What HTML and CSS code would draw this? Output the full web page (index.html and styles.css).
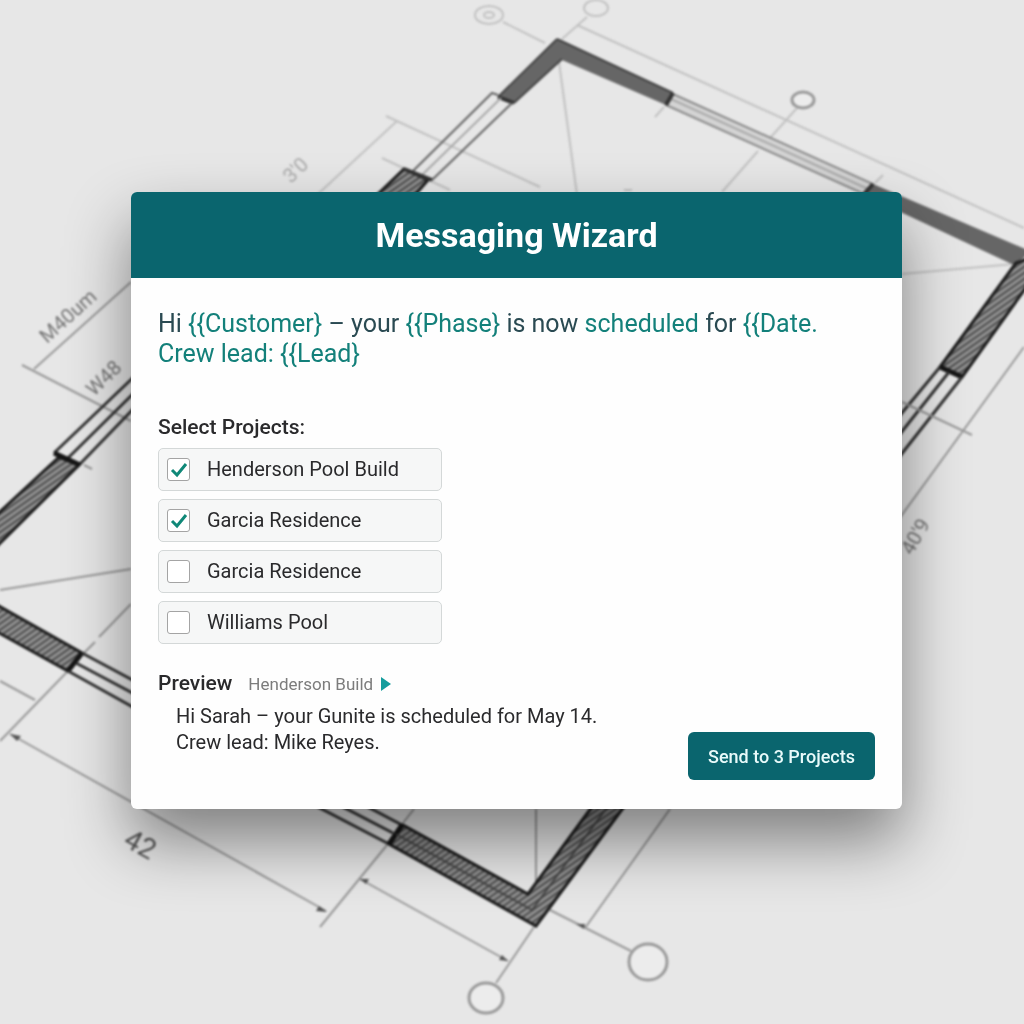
FILE: index.html
```html
<!DOCTYPE html>
<html lang="en">
<head>
    <meta charset="UTF-8">
    <meta name="viewport" content="width=device-width, initial-scale=1.0">
    <title>Messaging Wizard</title>
    <link rel="stylesheet" href="styles.css">
</head>

<body>

    <!-- Floor plan behind the dialog -->
    <svg class="blueprint" viewBox="0 0 1024 1024" preserveAspectRatio="xMidYMid slice" aria-hidden="true">
        <defs>
            <pattern id="hatch" width="5" height="5" patternUnits="userSpaceOnUse" patternTransform="rotate(55)">
                <rect width="5" height="5" fill="#929292"/>
                <path d="M0 0V5" stroke="#4c4c4c" stroke-width="4"/>
            </pattern>
        </defs>

        <!-- top corner, furthest away -->
        <g class="far">
            <g class="thin">
                <ellipse cx="489" cy="15" rx="14" ry="9"/>
                <ellipse cx="489" cy="15" rx="5" ry="3"/>
                <ellipse cx="596" cy="8" rx="12" ry="8"/>
                <path d="M503 22L545 43M587 17L562 39M577 25L1024 228"/>
                <path d="M559 62L577 195M624 190h8"/>
                <path d="M797 108L762 147M758 151L722 192M883 175l-8 8M664 107l-9 10"/>
                <path d="M386 116L540 187M397 121L318 194M382 158L450 190"/>
                <path d="M902 274L1014 264"/>
            </g>
            <ellipse class="ring" cx="803" cy="100" rx="11" ry="8"/>
            <path class="pane" d="M673 94L873 184L864 194L666 105Z"/>
            <path class="line light" d="M671 99L868 189"/>
            <path class="solid" d="M498 97L557 39L673 93L666 105L562 60L514 103Z"/>
            <path class="solid" d="M873 184L1030 251L1016 266L862 194Z"/>
            <path class="edge" d="M557 39L673 93M557 39L498 97M562 59L514 103"/>
            <path class="cap" d="M498 97L514 103M673 93L666 105M873 184L864 194"/>
            <path class="line" d="M498 95L492 93L413 171M512 103L432 180"/>
            <path class="line light" d="M501 98L422 175"/>
            <path class="hatched" d="M404 169L428 180L414 196H376Z"/>
            <path class="cap" d="M404 169L432 180"/>
            <text class="faint" transform="translate(291 184) rotate(-44)">3'0</text>
        </g>

        <!-- right and left walls -->
        <g class="near">
            <path class="hatched" d="M1016 263L940 367L962 377L1040 268V254Z"/>
            <path class="cap" d="M940 367L962 377"/>
            <path class="line dark" d="M940 367L896 420M949 372L896 439M962 377L896 461"/>
            <g class="thin mid">
                <path d="M902 402L972 435M1024 347L896 523"/>
                <path d="M131 282L34 369M22 365L131 421M84 465l8 4"/>
                <path d="M0 590L131 569M131 604L99 637M95 642L82 655M67 672L0 741M0 681L35 700"/>
                <path d="M10 734L326 911M387 845L320 927M414 809L403 823"/>
                <path d="M360 879L508 961M534 927L496 983M536 809V888"/>
                <path d="M550 910L631 951M670 809L585 928"/>
            </g>
            <path class="arrow" d="M10 734l11 2-4 5zM327 912l-11-1 3-5zM360 879l9 0-3 5zM508 961l-9-1 3-5zM584 929l-8-5 9 0z"/>

            <path class="line dark" d="M140 371L54 453M140 387L68 458M140 402L80 464"/>
            <path class="hatched" d="M59 457L-10 521V553L79 465Z"/>
            <path class="cap" d="M54 453L80 465"/>

            <path class="hatched" d="M-10 601L82 653L68 671L-10 628Z"/>
            <path class="cap" d="M82 653L68 671"/>
            <path class="line dark" d="M82 653L140 684M76 663L140 697M68 671L140 711"/>

            <path class="line dark" d="M318 807L389 844M343 807L393 833M368 807L402 825"/>
            <path class="hatched" d="M403 825L528 894L594 804H626L536 926L389 844Z"/>
            <path class="cap" d="M402 825L389 844"/>
            <path class="edge" d="M396 834L532 910L608 806"/>

            <ellipse class="ring" cx="648" cy="962" rx="19" ry="18"/>
            <ellipse class="ring" cx="486" cy="998" rx="17" ry="15"/>

            <text transform="translate(47 344) rotate(-42)">M40um</text>
            <text transform="translate(94 397) rotate(-44)">W48</text>
            <text class="big" transform="translate(122 845) rotate(29)">42</text>
            <text transform="translate(912 556) rotate(-60)">40'9</text>
        </g>
    </svg>

    <main class="wizard">
        <header class="wizard-header">
            <h1>Messaging Wizard</h1>
        </header>

        <div class="wizard-body">
            <p class="template">
                <span class="ink">Hi</span> {{Customer} <span class="ink">– your</span> {{Phase} <span class="ink">is now</span> scheduled <span class="ink">for</span> {{Date.<br>
                Crew lead: {{Lead}
            </p>

            <fieldset class="projects">
                <legend>Select Projects:</legend>
                <label class="project"><input type="checkbox" checked> Henderson Pool Build</label>
                <label class="project"><input type="checkbox" checked> Garcia Residence</label>
                <label class="project"><input type="checkbox"> Garcia Residence</label>
                <label class="project"><input type="checkbox"> Williams Pool</label>
            </fieldset>

            <div class="wizard-footer">
                <section class="preview">
                    <div class="preview-head">
                        <h2>Preview</h2>
                        <button type="button" class="preview-next">
                            Henderson Build
                            <svg width="10" height="14" viewBox="0 0 10 14" aria-hidden="true"><path d="M0 0L10 7L0 14Z" fill="#149c9c"/></svg>
                        </button>
                    </div>
                    <p>Hi Sarah – your Gunite is scheduled for May 14.<br>Crew lead: Mike Reyes.</p>
                </section>
                <button type="button" class="send-button">Send to 3 Projects</button>
            </div>
        </div>
    </main>

</body>
</html>
```
FILE: styles.css
```css
* {
    box-sizing: border-box;
}

body {
    margin: 0;
    min-height: 100vh;
    padding: 192px 122px 24px 131px;
    background-color: #e7e7e7;
    color: #2a2a2c;
    font-family: Roboto, "Liberation Sans", sans-serif;
}

h1, h2, p {
    margin: 0;
}

/* Floor plan */
.blueprint {
    position: fixed;
    inset: 0;
    width: 100%;
    height: 100%;
    z-index: -1;
    fill: none;
}

.far,
.near {
    filter: blur(1px);
}

.thin {
    stroke: #c2c2c2;
    stroke-width: 2;
}

.thin.mid {
    stroke: #999;
}

.line {
    stroke: #666;
    stroke-width: 2;
}

.line.light {
    stroke: #aaa;
}

.line.dark {
    stroke: #333;
    stroke-width: 3;
}

.pane {
    fill: #d4d4d4;
    stroke: #8c8c8c;
    stroke-width: 2;
}

.solid {
    fill: #666;
}

.edge {
    stroke: #444;
    stroke-width: 2;
}

.hatched {
    fill: url(#hatch);
    stroke: #1c1c1c;
    stroke-width: 3;
}

.cap {
    stroke: #151515;
    stroke-width: 5;
}

.far .cap {
    stroke: #333;
    stroke-width: 4;
}

.ring {
    fill: #ececec;
    stroke: #999;
    stroke-width: 3;
}

.arrow {
    fill: #555;
}

.blueprint text {
    fill: #777;
    font-size: 20px;
}

.blueprint .faint {
    fill: #aaa;
}

.blueprint .big {
    fill: #555;
    font-size: 28px;
}

/* Dialog */
.wizard {
    border-radius: 6px;
    background-color: #fefefe;
    box-shadow: 0 32px 64px rgba(0, 0, 0, 0.45);
}

.wizard-header {
    padding: 22px;
    border-radius: 6px 6px 0 0;
    background-color: #0a656e;
    color: #fff;
    text-align: center;
}

.wizard-header h1 {
    font-size: 34px;
    font-weight: 700;
    line-height: 42px;
}

.wizard-body {
    padding: 31px 27px 29px;
}

.template {
    color: #13807a;
    font-size: 25px;
    line-height: 30px;
}

.template .ink {
    color: #2a4a52;
}

.projects {
    display: flex;
    flex-direction: column;
    gap: 8px;
    width: 284px;
    margin: 46px 0 0;
    padding: 0;
    border: none;
}

.projects legend {
    margin-bottom: 9px;
    padding: 0;
    font-size: 21px;
    font-weight: 500;
    line-height: 24px;
}

.project {
    display: flex;
    align-items: center;
    gap: 17px;
    height: 43px;
    padding: 0 8px 1px;
    border: 1px solid #d4d8d8;
    border-radius: 5px;
    background-color: #f6f7f7;
    font-size: 20px;
    cursor: pointer;
}

.project input {
    appearance: none;
    width: 23px;
    height: 23px;
    margin: 0;
    border: 1px solid #a4a4a4;
    border-radius: 3px;
    background-color: #fff;
}

.project input:checked {
    background-image: url("data:image/svg+xml,%3Csvg xmlns='http://www.w3.org/2000/svg' viewBox='0 0 21 21'%3E%3Cpath d='M4 11L9 16L18 5' fill='none' stroke='%23108878' stroke-width='3'/%3E%3C/svg%3E");
}

.wizard-footer {
    display: flex;
    justify-content: space-between;
    align-items: flex-end;
    margin-top: 27px;
}

.preview {
    align-self: flex-start;
    padding-bottom: 25px;
}

.preview-head {
    display: flex;
    align-items: baseline;
    gap: 16px;
    margin-bottom: 7px;
}

.preview h2 {
    font-size: 21px;
    font-weight: 500;
    line-height: 24px;
}

.preview-next {
    padding: 0;
    border: none;
    background: none;
    color: #7c7c7c;
    font-family: inherit;
    font-size: 17px;
    line-height: 24px;
    cursor: pointer;
}

.preview-next svg {
    margin-left: 4px;
    vertical-align: -1px;
}

.preview p {
    padding-left: 18px;
    font-size: 20px;
    line-height: 26px;
}

.send-button {
    height: 48px;
    padding: 0 20px;
    border: none;
    border-radius: 6px;
    background-color: #0a656e;
    color: #e8fafa;
    font-family: inherit;
    font-size: 18px;
    font-weight: 500;
    cursor: pointer;
}
```
